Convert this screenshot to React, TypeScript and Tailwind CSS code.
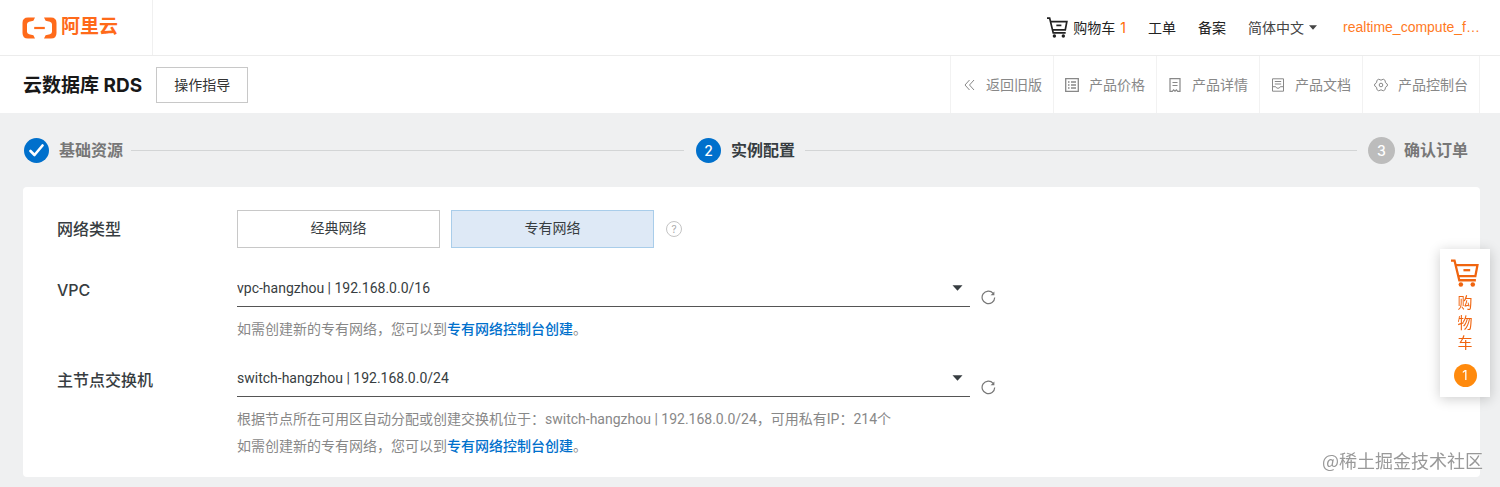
import { useState, type ReactNode } from 'react';

const options = ['经典网络', '专有网络'];

function LogoMark() {
  return (
    <svg className="h-[22px] w-[35px]" viewBox="0 0 35 22" fill="none" aria-hidden="true">
      <path d="M13 .5H6Q.5.5 .5 6v10Q.5 21.500 6 21.500h7l-1.600-3.200-4.300-1.100Q5 16.600 5 14.700V7.300Q5 5.400 7.100 4.800l4.300-1.100z" fill="#ff6a1a" />
      <path d="M22 .5h7Q34.500.5 34.500 6v10q0 5.500-5.500 5.500h-7l1.600-3.200 4.300-1.100q2.100-.6 2.100-2.500V7.300q0-1.900-2.100-2.500l-4.300-1.100z" fill="#ff6a1a" />
      <path d="M12.200 11h10.600" stroke="#ff6a1a" strokeWidth="2.200" />
    </svg>
  );
}

function CartIcon({ className }: { className: string }) {
  return (
    <svg className={className} viewBox="0 0 27 27" fill="none" stroke="currentColor" strokeWidth="2.200" aria-hidden="true">
      <path d="M0 1.500h3.400L8 20.500h16" />
      <path d="M4.500 6H25.500l-2 10.500H7" />
      <path d="M12 10.800h6.500" />
      <circle cx="9.500" cy="24.500" r="2.200" fill="currentColor" stroke="none" />
      <circle cx="21" cy="24.500" r="2.200" fill="currentColor" stroke="none" />
    </svg>
  );
}

function LineIcon({ children, width = 1 }: { children: ReactNode; width?: number }) {
  return (
    <svg className="h-[14px] w-[14px] shrink-0" viewBox="0 0 14 14" fill="none" stroke="currentColor" strokeWidth={width} aria-hidden="true">
      {children}
    </svg>
  );
}

const productLinks = [
  { text: '返回旧版', icon: <LineIcon><path d="M7.500 2 3 7l4.500 5M12 2 7.500 7l4.500 5" /></LineIcon> },
  {
    text: '产品价格',
    icon: (
      <LineIcon width={1.3}>
        <path d="M.7.7h12.600v12.600H.7zM3 4h1.500M6 4h5M3 7h1.500M6 7h5M3 10h1.500M6 10h5" />
      </LineIcon>
    ),
  },
  {
    text: '产品详情',
    icon: (
      <LineIcon width={1.2}>
        <path d="M2 .7h10v12.600H9.700L8.400 11.800 7 13.200l-1.400-1.400-1.300 1.500H2zM4.500 4.500h5M4.500 7.500h5" />
      </LineIcon>
    ),
  },
  {
    text: '产品文档',
    icon: (
      <LineIcon>
        <path d="M1.500.8h11v12.400h-11zM3.800 3.500h6.400M3.800 6h6.400M1.500 8.700h3.200q.6 1.600 2.300 1.600t2.300-1.600h3.200" />
      </LineIcon>
    ),
  },
  {
    text: '产品控制台',
    icon: (
      <LineIcon>
        <path d="M4.700 1.200 7 2.200l2.300-1 1.800 1.200.3 2.200L13.300 6v2l-1.900 1.400-.3 2.200-1.800 1.200-2.300-1-2.300 1-1.800-1.200-.3-2.200L.7 8V6l1.900-1.400.3-2.200z" />
        <circle cx="7" cy="7" r="1.800" />
      </LineIcon>
    ),
  },
];

function Caret({ className }: { className: string }) {
  return (
    <svg className={className} viewBox="0 0 10 6" fill="currentColor" aria-hidden="true">
      <path d="M0 .3h10L5 5.700z" />
    </svg>
  );
}

function TopBar() {
  return (
    <header className="flex h-14 items-center border-b border-[#ececec] bg-white text-[#222]">
      <a href="#home" className="flex h-full w-[153px] items-center gap-1 border-r border-[#f0f0f0] pl-[22px] text-[19px] font-bold text-[#ff6a1a]">
        <LogoMark />
        阿里云
      </a>
      <nav className="ml-auto flex items-center gap-[22px] pr-5 text-[14px]">
        <a href="#cart" className="flex items-center gap-[5px]">
          <CartIcon className="h-[21px] w-[21px]" />
          购物车
          <span className="text-[#ff6a00]">1</span>
        </a>
        <a href="#tickets">工单</a>
        <a href="#filing">备案</a>
        <button type="button" className="flex items-center gap-[5px] text-[#444]">
          简体中文
          <Caret className="h-[5px] w-2" />
        </button>
        <a href="#account" className="pl-1 font-['Liberation_Sans',sans-serif] text-[#ff7a1f]">
          realtime_compute_f…
        </a>
      </nav>
    </header>
  );
}

function ProductBar() {
  return (
    <div className="flex h-[57px] items-center bg-white pr-5 pl-[23px]">
      <h1 className="pt-1 text-[19px] font-bold text-[#181818]">云数据库 RDS</h1>
      <button type="button" className="ml-[14px] h-9 w-[92px] border border-[#c8c8c8] text-[14px] text-[#333]">
        操作指导
      </button>
      <nav className="ml-auto flex h-full border-r border-[#f2f2f2] text-[14px] text-[#888]">
        {productLinks.map((link) => (
          <a key={link.text} href="#product" className="flex items-center gap-[10px] border-l border-[#f2f2f2] px-[11px]">
            {link.icon}
            {link.text}
          </a>
        ))}
      </nav>
    </div>
  );
}

function Steps() {
  return (
    <ol className="flex h-[74px] items-center pr-8 pl-6 text-[16px] font-bold text-[#777]">
      <li className="flex flex-1 items-center">
        <span className="flex h-[25px] w-[25px] items-center justify-center rounded-full bg-[#0070cc]">
          <svg className="h-[15px] w-[15px]" viewBox="0 0 15 15" fill="none" stroke="white" strokeWidth="2.600" aria-hidden="true">
            <path d="M1.500 8 5.500 12 13.500 2.500" strokeLinecap="round" strokeLinejoin="round" />
          </svg>
        </span>
        <span className="pl-[10px]">基础资源</span>
        <span className="mr-3 ml-2 h-px flex-1 bg-[#d3d5d6]" />
      </li>
      <li className="flex flex-1 items-center" aria-current="step">
        <span className="flex h-[25px] w-[25px] items-center justify-center rounded-full bg-[#0070cc] text-[14px] font-medium text-white">2</span>
        <span className="pl-[10px] text-[#373d41]">实例配置</span>
        <span className="mr-[11px] ml-[10px] h-px flex-1 bg-[#d3d5d6]" />
      </li>
      <li className="flex items-center">
        <span className="flex h-[27px] w-[27px] items-center justify-center rounded-full bg-[#bcbcbc] text-[14px] font-medium text-white">3</span>
        <span className="pl-[9px]">确认订单</span>
      </li>
    </ol>
  );
}

function Field({ id, label, value, children }: { id: string; label: string; value: string; children: ReactNode }) {
  return (
    <div className="flex">
      <label htmlFor={id} className="w-[180px] shrink-0 pt-2 text-[16px] leading-6 font-medium">
        {label}
      </label>
      <div className="min-w-0 flex-1 font-[Roboto,'Noto_Sans_CJK_SC',sans-serif]">
        <div className="flex items-end gap-[11px]">
          <div className="relative max-w-[733px] flex-1">
            <select id={id} className="block h-[37px] w-full appearance-none border-b border-[#555] bg-transparent text-[14px] text-[#373d41]">
              <option>{value}</option>
            </select>
            <Caret className="pointer-events-none absolute top-[15px] right-[7px] h-[6px] w-[11px]" />
          </div>
          <button type="button" aria-label="刷新" className="pb-[2px] text-[#777]">
            <svg className="h-[15px] w-[15px]" viewBox="0 0 15 15" fill="none" stroke="currentColor" strokeWidth="1.200" aria-hidden="true">
              <path d="M13.700 7.500A6.300 6.300 0 1 1 12.200 3.300" />
              <path d="M13.400 1.500v3.800H9.600z" fill="currentColor" stroke="none" />
            </svg>
          </button>
        </div>
        <div className="mt-[9px] text-[14px] leading-[27px] text-[#888]">{children}</div>
      </div>
    </div>
  );
}

function CreateHint() {
  return (
    <p>
      如需创建新的专有网络，您可以到
      <a href="#vpc-console" className="font-medium text-[#0070cc]">专有网络控制台创建</a>。
    </p>
  );
}

export default function App() {
  const [network, setNetwork] = useState('专有网络');
  return (
    <div className="min-h-screen bg-[#eff0f1] font-[Inter,'Noto_Sans_CJK_SC',sans-serif] text-[#373d41]">
      <TopBar />
      <ProductBar />
      <Steps />
      <main className="mr-5 ml-[23px] flex flex-col gap-[17px] rounded bg-white pt-[23px] pb-[17px] pl-[34px]">
        <div className="flex h-[43px] items-start" role="group" aria-labelledby="network-type">
          <span id="network-type" className="w-[180px] shrink-0 pt-[7px] text-[16px] leading-6 font-medium">
            网络类型
          </span>
          <div className="flex items-center gap-[11px]">
            {options.map((option) => (
              <button
                key={option}
                type="button"
                aria-pressed={network === option}
                onClick={() => setNetwork(option)}
                className={
                  network === option
                    ? 'h-[38px] w-[203px] border border-[#a9cdea] bg-[#dee9f6] pb-1 text-[14px]'
                    : 'h-[38px] w-[203px] border border-[#c8c8c8] bg-white pb-1 text-[14px]'
                }
              >
                {option}
              </button>
            ))}
            <button type="button" aria-label="帮助" className="ml-px h-4 w-4 rounded-full border border-[#c4c4c4] text-[10px] leading-[14px] text-[#aaa]">
              ?
            </button>
          </div>
        </div>
        <Field id="vpc" label="VPC" value="vpc-hangzhou | 192.168.0.0/16">
          <CreateHint />
        </Field>
        <Field id="switch" label="主节点交换机" value="switch-hangzhou | 192.168.0.0/24">
          <p>根据节点所在可用区自动分配或创建交换机位于：switch-hangzhou | 192.168.0.0/24，可用私有IP：214个</p>
          <CreateHint />
        </Field>
      </main>
      <a href="#cart" className="fixed top-[249px] right-[10px] flex w-[50px] flex-col items-center bg-white pt-[10px] pb-[10px] text-[#f0640f] shadow-[0_2px_12px_rgba(0,0,0,0.2)]">
        <CartIcon className="h-7 w-7" />
        <span className="flex flex-col items-center pt-[6px] text-[15px] leading-5">
          <span>购</span>
          <span>物</span>
          <span>车</span>
        </span>
        <span className="mt-[11px] flex h-[23px] w-[23px] items-center justify-center rounded-full bg-[#ff8a0d] text-[13px] text-white">1</span>
      </a>
      <div className="fixed right-[17px] bottom-[13px] font-['Noto_Sans_CJK_SC',sans-serif] text-[18px] leading-7 text-[#999] [text-shadow:0_0_2px_white]">
        @稀土掘金技术社区
      </div>
    </div>
  );
}
